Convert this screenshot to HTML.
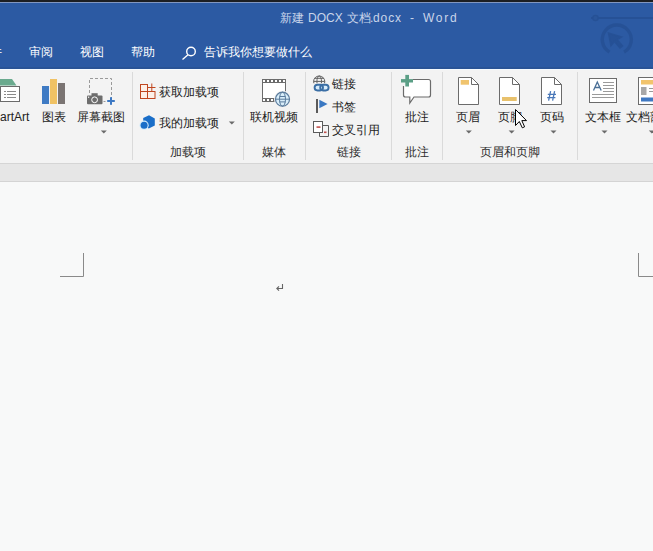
<!DOCTYPE html>
<html><head><meta charset="utf-8">
<style>
*{margin:0;padding:0;box-sizing:border-box}
html,body{width:653px;height:551px;overflow:hidden;background:#f8f9f9;font-family:"Liberation Sans",sans-serif;position:relative}
.a{position:absolute;white-space:nowrap;line-height:1}
#top{left:0;top:0;width:653px;height:2px;background:#1c1e22}
#tl{left:0;top:2px;width:653px;height:1px;background:#8196c0}
#title{left:0;top:3px;width:653px;height:66px;background:#2c5aa3}
#hl{left:0;top:69px;width:653px;height:1px;background:#f6fbff}
#bl{left:0;top:67px;width:653px;height:2px;background:#2a5496}
#ribbon{left:0;top:70px;width:653px;height:93px;background:#f3f3f3}
#rb{left:0;top:163px;width:653px;height:1px;background:#d5d5d5}
#strip{left:0;top:164px;width:653px;height:17px;background:#e6e6e6}
#sb{left:0;top:181px;width:653px;height:1px;background:#d4d4d4}
.ttl{color:#c9d5ea;font-size:12px}
.tab{color:#fff;font-size:12px;font-weight:500}
.lbl{color:#222;font-size:12px;font-weight:500}
.grp{color:#2e2e2e;font-size:12px;font-weight:500}
.sep{width:1px;background:#dadada;top:72px;height:88px}
.arr{width:0;height:0;border-left:2.5px solid transparent;border-right:2.5px solid transparent;border-top:3px solid #6a6a6a}
svg{position:absolute;left:0;top:0}
</style></head><body>
<div class="a" id="top"></div>
<div class="a" id="title"></div>
<div class="a" id="tl"></div>
<div class="a" id="bl"></div>
<div class="a" id="hl"></div>
<div class="a" id="ribbon"></div>
<div class="a" id="rb"></div>
<div class="a" id="strip"></div>
<div class="a" id="sb"></div>

<div class="a ttl" style="left:280px;top:12px">新建</div>
<div class="a ttl" style="left:308px;top:12px">DOCX</div>
<div class="a ttl" style="left:347px;top:12px">文档</div>
<div class="a ttl" style="left:370px;top:12px">.</div>
<div class="a ttl" style="left:373px;top:12px;letter-spacing:0.9px">docx</div>
<div class="a ttl" style="left:410px;top:12px">-</div>
<div class="a ttl" style="left:423px;top:12px;letter-spacing:1.7px">Word</div>

<div class="a tab" style="left:-10px;top:46px">件</div>
<div class="a tab" style="left:29px;top:46px">审阅</div>
<div class="a tab" style="left:80px;top:46px">视图</div>
<div class="a tab" style="left:131px;top:46px">帮助</div>
<div class="a tab" style="left:204px;top:46px;font-weight:400">告诉我你想要做什么</div>

<!-- ribbon labels -->
<div class="a lbl" style="left:-18px;top:111px">SmartArt</div>
<div class="a lbl" style="left:42px;top:111px">图表</div>
<div class="a lbl" style="left:77px;top:111px">屏幕截图</div>
<div class="a sep" style="left:132px"></div>
<div class="a lbl" style="left:159px;top:86px">获取加载项</div>
<div class="a lbl" style="left:159px;top:117px">我的加载项</div>
<div class="a grp" style="left:170px;top:146px">加载项</div>
<div class="a sep" style="left:243px"></div>
<div class="a lbl" style="left:250px;top:111px">联机视频</div>
<div class="a grp" style="left:262px;top:146px">媒体</div>
<div class="a sep" style="left:305px"></div>
<div class="a lbl" style="left:332px;top:78px">链接</div>
<div class="a lbl" style="left:332px;top:101px">书签</div>
<div class="a lbl" style="left:332px;top:124px">交叉引用</div>
<div class="a grp" style="left:337px;top:146px">链接</div>
<div class="a sep" style="left:391px"></div>
<div class="a lbl" style="left:405px;top:111px">批注</div>
<div class="a grp" style="left:405px;top:146px">批注</div>
<div class="a sep" style="left:442px"></div>
<div class="a lbl" style="left:456px;top:111px">页眉</div>
<div class="a lbl" style="left:498px;top:111px">页脚</div>
<div class="a lbl" style="left:540px;top:111px">页码</div>
<div class="a grp" style="left:480px;top:146px">页眉和页脚</div>
<div class="a sep" style="left:577px"></div>
<div class="a lbl" style="left:585px;top:111px">文本框</div>
<div class="a lbl" style="left:626px;top:111px">文档部件</div>

<svg width="653" height="551" viewBox="0 0 653 551">
<!-- watermark -->
<g fill="none" stroke="#234c8e" opacity="0.6">
  <path d="M591 18 H653" stroke-width="2.2"/>
  <circle cx="595.5" cy="18" r="2.6" fill="#2a5496" stroke-width="1.4"/>
  <path d="M609.5 52.1 A14.5 14.5 0 1 1 624.1 52.1" stroke-width="3.4"/>
  <path d="M608.5 33 L611 45.5 L614.5 41.5 L620 48 L622.5 46 L617 39.5 L621.5 37 Z" fill="#234c8e" stroke-width="1.5"/>
</g>
<!-- SmartArt -->
<polygon points="-2,79 12,79 16.5,85.5 -2,85.5" fill="#6aaa8e"/>
<rect x="0.5" y="86.5" width="19" height="15" fill="#fff" stroke="#6b6b6b"/>
<g stroke="#8a8a8a"><path d="M4 91.5H6M7 91.5H16M4 94.5H6M7 94.5H16M4 97.5H6M7 97.5H16"/></g>
<!-- Chart -->
<rect x="42" y="86" width="7" height="18" fill="#3f7bc4"/>
<rect x="50" y="79" width="7" height="25" fill="#f0c264"/>
<rect x="58" y="83" width="7" height="21" fill="#7a7472"/>
<!-- Screenshot -->
<path d="M89.5 93V78.5H111.5V98.5" fill="none" stroke="#9a9a9a" stroke-dasharray="3 2"/>
<rect x="87" y="95.5" width="15.5" height="8.8" rx="1" fill="#6d6d6d"/>
<rect x="91.5" y="93.2" width="6.2" height="3" fill="#6d6d6d"/>
<circle cx="94.6" cy="99.8" r="2.9" fill="#6d6d6d" stroke="#fff" stroke-width="1"/>
<rect x="88" y="96.6" width="1.2" height="1.2" fill="#fff"/>
<path d="M103.5 101.5H105.5" stroke="#9a9a9a"/>
<rect x="107.2" y="100" width="7.6" height="2" fill="#3c78c3"/>
<rect x="110" y="97.2" width="2" height="7.6" fill="#3c78c3"/>
<!-- Get add-ins -->
<g fill="#fdf0e8" stroke="#c0461f" stroke-width="1">
<rect x="140.5" y="84.5" width="7" height="7"/>
<rect x="140.5" y="91.5" width="7" height="7"/>
<rect x="147.5" y="91.5" width="7.5" height="7"/>
<path d="M151.8 83.5V91M148 87.5H155.5" fill="none"/>
</g>
<!-- My add-ins -->
<polygon points="149,115.2 154.8,118.4 154.8,125.6 148.8,128.4 143.2,125.2 143.2,118" fill="#1a6ec8"/>
<circle cx="144.1" cy="125.2" r="4.6" fill="#d2ebfb"/>
<circle cx="144.1" cy="125.2" r="3.5" fill="#1a6ec8"/>
<!-- Online video -->
<rect x="262.5" y="79.5" width="23" height="22" fill="#fff" stroke="#6b6b6b"/>
<rect x="262" y="79" width="24" height="4" fill="#6b6b6b"/>
<rect x="262" y="98" width="24" height="4" fill="#6b6b6b"/>
<g fill="#fff"><rect x="263" y="80" width="2" height="2"/><rect x="267" y="80" width="2" height="2"/><rect x="271" y="80" width="2" height="2"/><rect x="275" y="80" width="2" height="2"/><rect x="279" y="80" width="2" height="2"/><rect x="283" y="80" width="2" height="2"/><rect x="263" y="99" width="2" height="2"/><rect x="267" y="99" width="2" height="2"/><rect x="271" y="99" width="2" height="2"/></g>
<circle cx="282.5" cy="99.2" r="8.5" fill="#f3f3f3"/>
<circle cx="282.5" cy="99.2" r="7" fill="#d9eefa" stroke="#5a7b9c" stroke-width="1.2"/>
<g fill="none" stroke="#5a7b9c" stroke-width="1"><ellipse cx="282.5" cy="99.2" rx="3" ry="7"/><path d="M275.5 99.2H289.5M279.5 96.5H285.5M279.5 101.9H285.5"/></g>
<!-- Link -->
<clipPath id="gclip"><rect x="310" y="70" width="20" height="13.2"/></clipPath>
<g fill="none" stroke="#606060" stroke-width="1" clip-path="url(#gclip)"><circle cx="319.2" cy="81.6" r="5.6"/><ellipse cx="319.2" cy="81.6" rx="2.3" ry="5.6"/><path d="M314.5 78.3H324M313.6 81.4H324.8"/></g>
<rect x="314.5" y="84.8" width="14.2" height="5.6" rx="2.8" fill="#d8ecfa"/>
<g fill="none" stroke="#3a6ea5" stroke-width="1.9"><rect x="314.6" y="84.7" width="8.4" height="5.8" rx="2.9"/><rect x="320.2" y="84.7" width="8.4" height="5.8" rx="2.9"/></g>
<!-- Bookmark -->
<rect x="316" y="99" width="2" height="14" fill="#5a5a5a"/>
<polygon points="319.3,99.7 327.6,104 319.3,108.3" fill="#3a78c2"/>
<!-- Cross-ref -->
<rect x="313.5" y="121.5" width="9" height="11" fill="#fff" stroke="#5a5a5a"/>
<path d="M322.5 125.5H328.5V136.5H319.5V132.5" fill="none" stroke="#5a5a5a"/>
<rect x="316.5" y="126.3" width="4" height="1.6" fill="#c0504d"/>
<rect x="324" y="131.5" width="2.5" height="1.6" fill="#c0504d"/>
<!-- Comment -->
<path d="M413 79.5H428.5Q430.5 79.5 430.5 81.5V95Q430.5 97 428.5 97H414L409.8 103V97H405.5Q403.5 97 403.5 95V86" fill="#fff" stroke="#6b6b6b" stroke-width="1.2"/>
<rect x="405.3" y="74.9" width="3.7" height="11.6" fill="#5b9f86"/>
<rect x="401" y="79.1" width="12" height="3.4" fill="#5b9f86"/>
<!-- Header -->
<path d="M458.5 77.5H471.5L478.5 84.5V104.5H458.5Z" fill="#fff" stroke="#6b6b6b"/>
<path d="M471.5 77.5V84.5H478.5" fill="none" stroke="#6b6b6b"/>
<rect x="460.7" y="80" width="8.3" height="4.7" fill="#f0c46e"/>
<!-- Footer -->
<path d="M499.5 77.5H512.5L519.5 84.5V104.5H499.5Z" fill="#fff" stroke="#6b6b6b"/>
<path d="M512.5 77.5V84.5H519.5" fill="none" stroke="#6b6b6b"/>
<rect x="502" y="97" width="14.7" height="4" fill="#e8c16c"/>
<!-- Page number -->
<path d="M541.5 77.5H554.5L561.5 84.5V104.5H541.5Z" fill="#fff" stroke="#6b6b6b"/>
<path d="M554.5 77.5V84.5H561.5" fill="none" stroke="#6b6b6b"/>
<g stroke="#4a78b8" stroke-width="1.3"><path d="M550.6 91.2L548.6 100.7M554.6 91.2L552.6 100.7M547.8 94.4H556M547.2 97.6H555.4"/></g>
<!-- Text box -->
<rect x="589.5" y="78.5" width="27" height="24" fill="#fff" stroke="#6b6b6b"/>
<path d="M593.5 90.5L597.3 82L601.2 90.5M594.8 87.5H599.8" fill="none" stroke="#4a6f96" stroke-width="1.3"/>
<path d="M603 82.5H614M603 85.5H614M603 88.5H614M603 91.5H614M592 94.5H614M592 97.5H614" stroke="#9a9a9a"/>
<!-- Doc parts -->
<rect x="638.5" y="77.5" width="30" height="27" fill="#fff" stroke="#6b6b6b"/>
<rect x="641" y="80" width="14" height="4.5" fill="#f2c46c"/>
<rect x="641" y="87" width="5.5" height="8" fill="#a8a8a8"/>
<path d="M649 88.5H653M649 91.5H653" stroke="#999"/>
<rect x="641" y="97.5" width="14" height="4" fill="#3f78c2"/>
<!-- search icon -->
<g fill="none" stroke="#fff" stroke-width="1.4"><circle cx="191" cy="51.5" r="4.3"/><path d="M188 54.8L182.5 59.5"/></g>
<!-- arrows -->
<polygon points="100.8,130.5 106.8,130.5 103.8,133.5" fill="#6a6a6a"/><polygon points="465.8,130.5 471.8,130.5 468.8,133.5" fill="#6a6a6a"/><polygon points="508.6,130.5 514.6,130.5 511.6,133.5" fill="#6a6a6a"/><polygon points="550.5,130.5 556.5,130.5 553.5,133.5" fill="#6a6a6a"/><polygon points="601.5,130.5 607.5,130.5 604.5,133.5" fill="#6a6a6a"/><polygon points="648.8,130.5 654.8,130.5 651.8,133.5" fill="#6a6a6a"/><polygon points="228.8,121.5 234.8,121.5 231.8,124.5" fill="#6a6a6a"/>
<!-- cursor -->
<path d="M515.5 109.5V125.5L519.3 121.5L522.3 127.8L524.6 126.8L521.8 120.6H526.5Z" fill="#fff" stroke="#000" stroke-width="1" stroke-linejoin="miter"/>
<!-- page marks -->
<path d="M83.5 253V276.5H60M638.5 253V276.5H653" fill="none" stroke="#8a8a8a"/>
<!-- pilcrow -->
<path d="M282.5 284V288.5H277M279 286.3L276.8 288.5L279 290.7" fill="none" stroke="#666" stroke-width="1.1"/>
</svg>
</body></html>
